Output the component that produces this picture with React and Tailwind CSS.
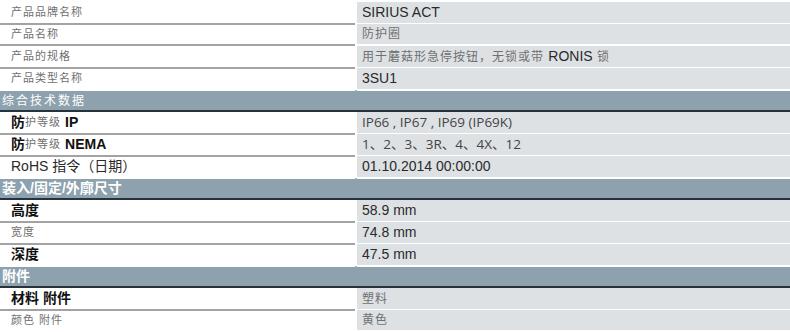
import React from "react";

const SANS = "font-['Liberation_Sans','Noto_Sans_CJK_SC',sans-serif]";

function Seg({ s }) {
  if (s.k === "b")
    return <span className="font-bold text-[#111] text-[14px]">{s.t}</span>;
  if (s.k === "l")
    return (
      <span className="font-normal text-[#707070] text-[11px] tracking-[1px]">{s.t}</span>
    );
  if (s.k === "v")
    return (
      <span className="font-normal text-[#707070] text-[12px] tracking-[1px]">{s.t}</span>
    );
  if (s.k === "o")
    return (
      <span className="font-['Open_Sans','Noto_Sans_CJK_SC',sans-serif] text-[#444] text-[13.5px]">
        {s.t}
      </span>
    );
  return <span className="text-[#2a2a2a] text-[14px]">{s.t}</span>;
}

function Row({ left, right, last }) {
  return (
    <div className="grid grid-cols-[355px_1fr] gap-x-[2px] h-[22px]">
      <div
        className={
          "flex items-center pl-[11px] whitespace-pre " +
          (last ? "border-b-2 border-white" : "border-b-2 border-[#a3a3a3]")
        }
      >
        {left.map((s, i) => (
          <Seg key={i} s={s} />
        ))}
      </div>
      <div className="flex items-center pl-[5px] bg-[#dde1e4] border-b-2 border-white whitespace-pre">
        {right.map((s, i) => (
          <Seg key={i} s={s} />
        ))}
      </div>
    </div>
  );
}

function Header({ children, light }) {
  return (
    <div className="h-[22px] bg-[#8da2ae] border-t border-[#a9bac3] border-b-2 border-b-[#27323a] flex items-center pl-[2px]">
      <span
        className={
          light
            ? "text-white font-normal text-[12px] tracking-[2px]"
            : "text-white font-bold text-[14px]"
        }
      >
        {children}
      </span>
    </div>
  );
}

const L = (t) => ({ k: "l", t });
const V = (t) => ({ k: "v", t });
const B = (t) => ({ k: "b", t });
const N = (t) => ({ k: "n", t });
const O = (t) => ({ k: "o", t });

export default function App() {
  return (
    <div className={"w-[790px] h-[332px] bg-white overflow-hidden pt-[2px] " + SANS}>
      <Row left={[L("产品品牌名称")]} right={[N("SIRIUS ACT")]} />
      <Row left={[L("产品名称")]} right={[V("防护圈")]} />
      <Row
        left={[L("产品的规格")]}
        right={[V("用于蘑菇形急停按钮，无锁或带 "), N("RONIS"), V(" 锁")]}
      />
      <Row left={[L("产品类型名称")]} right={[N("3SU1")]} last />
      <Header light>综合技术数据</Header>
      <Row left={[B("防"), L("护等级 "), B("IP")]} right={[O("IP66 , IP67 , IP69 (IP69K)")]} />
      <Row left={[B("防"), L("护等级 "), B("NEMA")]} right={[O("1、2、3、3R、4、4X、12")]} />
      <Row left={[N("RoHS 指令（日期）")]} right={[N("01.10.2014 00:00:00")]} last />
      <Header>装入/固定/外廓尺寸</Header>
      <Row left={[B("高度")]} right={[N("58.9 mm")]} />
      <Row left={[L("宽度")]} right={[N("74.8 mm")]} />
      <Row left={[B("深度")]} right={[N("47.5 mm")]} last />
      <Header>附件</Header>
      <Row left={[B("材料 附件")]} right={[V("塑料")]} />
      <Row left={[L("颜色 附件")]} right={[V("黄色")]} last />
    </div>
  );
}
